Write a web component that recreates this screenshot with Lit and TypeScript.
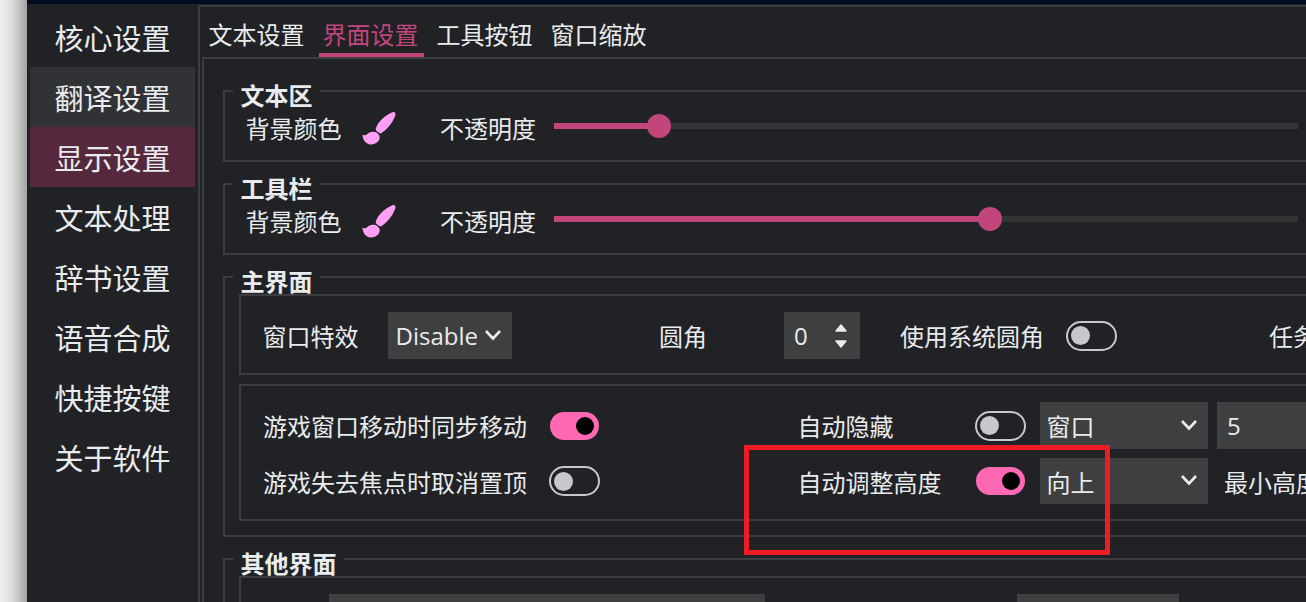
import { LitElement, html, css, svg } from 'lit';
import { customElement } from 'lit/decorators.js';

const NAV_ITEMS = ['核心设置', '翻译设置', '显示设置', '文本处理', '辞书设置', '语音合成', '快捷按键', '关于软件'];
const TABS = ['文本设置', '界面设置', '工具按钮', '窗口缩放'];

const BRUSH = svg`
  <path d="M30.4 .2C32.6 -.4 34 1 33.4 3C31.8 8.4 27.4 15.6 19 21.6C16.8 20.8 14.6 19.4 13.6 17.4C15 11 22 3.4 30.4 .2Z" />
  <path d="M.4 22.4C2 23.6 3.6 23.4 4.8 22.4C6.8 20.4 9.4 19.4 12 19.8C15.6 20.4 18 23 17.7 26C17.3 29.8 13.2 32.6 8.6 32.4C3.8 32.2 .7 27.6 .4 22.4Z" />
`;

@customElement('app-root')
export class AppRoot extends LitElement {
  static styles = css`
    :host {
      display: flex;
      position: relative;
      width: 1306px;
      height: 602px;
      overflow: hidden;
      font-family: 'Noto Sans CJK SC', 'Noto Sans', sans-serif;
      font-size: 24px;
      color: #e9ebed;
      background: #212226;
    }

    .shadow {
      flex: 0 0 27px;
      background: linear-gradient(to right, #f0f0f0 0%, #dcdcdc 45%, #a4a4a4 100%);
    }

    .window {
      flex: 1;
      min-width: 0;
      display: flex;
      flex-direction: column;
    }

    .top-strip {
      flex: 0 0 4px;
      background: #010c1c;
    }

    .body {
      flex: 1;
      display: flex;
      min-height: 0;
    }

    .nav {
      flex: 0 0 168px;
      padding: 3px 0 0 3px;
      box-sizing: border-box;
    }

    .nav-item {
      width: 165px;
      height: 60px;
      line-height: 60px;
      padding-left: 24.5px;
      box-sizing: border-box;
      font-size: 29px;
      white-space: nowrap;
    }
    .nav-item.hover {
      background: #313235;
    }
    .nav-item.active {
      background: #55283e;
    }

    .pane {
      flex: 1;
      min-width: 0;
      margin: 1px 0 0 3px;
      border-top: 2px solid #3c3d3f;
      border-left: 2px solid #3c3d3f;
    }

    .tabs {
      display: flex;
      height: 50px;
      padding-left: 2.5px;
    }

    .tab {
      box-sizing: border-box;
      width: 114px;
      height: 50px;
      padding-left: 6px;
      line-height: 54px;
      white-space: nowrap;
    }
    .tab.active {
      color: #c2467c;
    }
    .tab.active span {
      display: block;
      height: 50px;
      width: 105px;
      margin-left: -4px;
      padding-left: 4px;
      border-bottom: 4px solid #c2467c;
      box-sizing: border-box;
    }

    .tab-body {
      margin-left: 2px;
      height: 600px;
      border-top: 2px solid #3c3d3f;
      border-left: 2px solid #3c3d3f;
      padding: 31px 0 0 19px;
      width: 1200px;
    }

    .group {
      box-sizing: border-box;
      width: 1300px;
      height: 72px;
      border: 2px solid #3c3d3f;
      border-right: none;
      margin-bottom: 21px;
    }

    .group-title {
      width: fit-content;
      height: 26px;
      margin: -10px 0 0 8px;
      padding: 0 7px 0 7.5px;
      line-height: 26px;
      font-weight: 700;
      background: #212226;
      white-space: nowrap;
    }

    .color-row {
      display: flex;
      align-items: center;
      height: 38px;
      padding-left: 20.5px;
      white-space: nowrap;
    }

    .brush {
      width: 34px;
      height: 33px;
      margin: 2px 0 0 20.5px;
      fill: #ffa0f6;
      flex: none;
    }

    .opacity-label {
      margin-left: 44px;
    }

    .slider {
      position: relative;
      width: 744px;
      height: 6px;
      margin: -2px 0 0 18px;
      background: #333436;
    }
    .slider-fill {
      height: 100%;
      background: #c2467c;
    }
    .slider-knob {
      position: absolute;
      top: -9px;
      width: 24px;
      height: 24px;
      margin-left: -12px;
      border-radius: 50%;
      background: #c2467c;
    }

    .inner {
      box-sizing: border-box;
      margin-left: 14px;
      border: 2px solid #3c3d3f;
      border-right: none;
    }

    .main-group {
      height: 261px;
    }

    .effects {
      display: grid;
      grid-template-columns: 125.5px 271px 125px 116px 166px 203px auto;
      align-items: center;
      height: 81px;
      margin-bottom: 9px;
      padding: 2px 0 0 21.5px;
      white-space: nowrap;
    }

    .options {
      display: grid;
      grid-template-columns: 287px 247.5px 177.5px 65px 177px auto;
      grid-template-rows: 47px 46px;
      row-gap: 9px;
      align-items: center;
      height: 137px;
      padding: 16px 0 0 22px;
      white-space: nowrap;
    }

    .other-group {
      height: 100px;
    }
    .other-group .inner {
      height: 60px;
      padding: 16px 0 0 88px;
      display: flex;
    }

    .combo {
      box-sizing: border-box;
      display: flex;
      align-items: center;
      justify-content: space-between;
      height: 100%;
      padding: 0 10px 0 6.5px;
      background: #3e3f41;
    }
    .combo svg {
      width: 18px;
      height: 12px;
      flex: none;
      margin-top: -2px;
    }
    .latin {
      font-family: 'Open Sans', 'Noto Sans', sans-serif;
    }

    .combo-fit {
      width: 124px;
      height: 47px;
      padding-left: 7.5px;
    }
    .combo-wide {
      width: 168px;
    }
    .options .spin-value {
      padding-left: 10px;
      justify-content: flex-start;
    }

    .spin {
      width: 76px;
      height: 47px;
      padding: 0 12px 0 10px;
    }
    .spin svg {
      width: 14px;
      height: 26px;
      margin: 0;
      fill: #e9ebed;
      stroke: #e9ebed;
      stroke-width: 1.4;
      stroke-linejoin: round;
    }

    .min-height {
      padding-left: 7px;
    }

    .bottom-combo-a {
      width: 436px;
      height: 60px;
    }
    .bottom-combo-b {
      width: 162px;
      height: 60px;
      margin-left: 252px;
    }

    .toggle {
      box-sizing: border-box;
      display: flex;
      align-items: center;
      width: 51px;
      height: 30px;
      border-radius: 15px;
      border: 2px solid #c8c8cc;
      padding-left: 3px;
    }
    .toggle i {
      display: block;
      width: 19px;
      height: 19px;
      border-radius: 50%;
      background: #c8c8cc;
    }
    .toggle.on {
      width: 49px;
      height: 28px;
      border: none;
      background: #ff69b4;
      justify-content: flex-end;
      padding: 0 5px 0 0;
    }
    .toggle.on i {
      width: 18px;
      height: 18px;
      background: #000;
    }
    .toggle.nudge-left {
      margin-left: -1px;
    }
    .toggle.nudge-right {
      margin-left: 1px;
    }

    .annotation {
      position: absolute;
      left: 744px;
      top: 445px;
      width: 366px;
      height: 110px;
      box-sizing: border-box;
      border: 5px solid #ed1c24;
      pointer-events: none;
    }
  `;

  private chevron() {
    return html`<svg viewBox="0 0 18 12"><path d="M2 2l7 7.5L16 2" fill="none" stroke="#e9ebed" stroke-width="2.6" /></svg>`;
  }

  private toggle(on: boolean, nudge = '') {
    return html`<div class="toggle ${on ? 'on' : ''} ${nudge}"><i></i></div>`;
  }

  private colorRow(value: number) {
    return html`
      <div class="color-row">
        <span>背景颜色</span>
        <svg class="brush" viewBox="0 0 34 33">${BRUSH}</svg>
        <span class="opacity-label">不透明度</span>
        <div class="slider">
          <div class="slider-fill" style="width: ${value}%"></div>
          <div class="slider-knob" style="left: ${value}%"></div>
        </div>
      </div>
    `;
  }

  render() {
    return html`
      <div class="shadow"></div>
      <div class="window">
        <div class="top-strip"></div>
        <div class="body">
          <div class="nav">
            ${NAV_ITEMS.map(
              (item, i) => html`<div class="nav-item ${i === 1 ? 'hover' : ''} ${i === 2 ? 'active' : ''}">${item}</div>`
            )}
          </div>
          <div class="pane">
            <div class="tabs">
              ${TABS.map(
                (tab, i) => html`<div class="tab ${i === 1 ? 'active' : ''}"><span>${tab}</span></div>`
              )}
            </div>
            <div class="tab-body">
              <div class="group">
                <div class="group-title">文本区</div>
                ${this.colorRow(14.1)}
              </div>
              <div class="group">
                <div class="group-title">工具栏</div>
                ${this.colorRow(58.6)}
              </div>
              <div class="group main-group">
                <div class="group-title">主界面</div>
                <div class="inner effects">
                  <span>窗口特效</span>
                  <div class="combo combo-fit"><span class="latin">Disable</span>${this.chevron()}</div>
                  <span>圆角</span>
                  <div class="combo spin">
                    <span class="latin">0</span>
                    <svg viewBox="0 0 14 26">
                      <path d="M7 2l5 6H2z" /><path d="M7 24l5-6H2z" />
                    </svg>
                  </div>
                  <span>使用系统圆角</span>
                  ${this.toggle(false)}
                  <span>任务栏</span>
                </div>
                <div class="inner options">
                  <span>游戏窗口移动时同步移动</span>
                  ${this.toggle(true)}
                  <span>自动隐藏</span>
                  ${this.toggle(false)}
                  <div class="combo combo-wide"><span>窗口</span>${this.chevron()}</div>
                  <div class="combo spin-value"><span class="latin">5</span></div>
                  <span>游戏失去焦点时取消置顶</span>
                  ${this.toggle(false, 'nudge-left')}
                  <span>自动调整高度</span>
                  ${this.toggle(true, 'nudge-right')}
                  <div class="combo combo-wide"><span>向上</span>${this.chevron()}</div>
                  <span class="min-height">最小高度</span>
                </div>
              </div>
              <div class="group other-group">
                <div class="group-title">其他界面</div>
                <div class="inner">
                  <div class="combo bottom-combo-a"></div>
                  <div class="combo bottom-combo-b"></div>
                </div>
              </div>
            </div>
          </div>
        </div>
      </div>
      <div class="annotation"></div>
    `;
  }
}
